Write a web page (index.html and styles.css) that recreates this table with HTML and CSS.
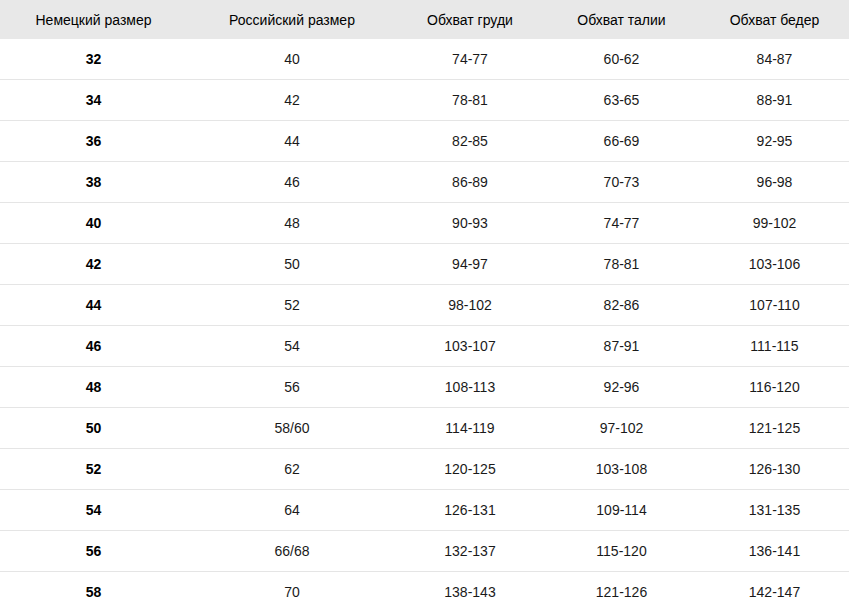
FILE: index.html
```html
<!DOCTYPE html>
<html lang="ru">
<head>
<meta charset="utf-8">
<link rel="stylesheet" href="styles.css">
</head>
<body>
<table class="size-table">
  <colgroup>
    <col class="c1"><col class="c2"><col class="c3"><col class="c4"><col class="c5">
  </colgroup>
  <thead>
    <tr><th>Немецкий размер</th><th>Российский размер</th><th>Обхват груди</th><th>Обхват талии</th><th>Обхват бедер</th></tr>
  </thead>
  <tbody>
    <tr><td class="de">32</td><td>40</td><td>74-77</td><td>60-62</td><td>84-87</td></tr>
    <tr><td class="de">34</td><td>42</td><td>78-81</td><td>63-65</td><td>88-91</td></tr>
    <tr><td class="de">36</td><td>44</td><td>82-85</td><td>66-69</td><td>92-95</td></tr>
    <tr><td class="de">38</td><td>46</td><td>86-89</td><td>70-73</td><td>96-98</td></tr>
    <tr><td class="de">40</td><td>48</td><td>90-93</td><td>74-77</td><td>99-102</td></tr>
    <tr><td class="de">42</td><td>50</td><td>94-97</td><td>78-81</td><td>103-106</td></tr>
    <tr><td class="de">44</td><td>52</td><td>98-102</td><td>82-86</td><td>107-110</td></tr>
    <tr><td class="de">46</td><td>54</td><td>103-107</td><td>87-91</td><td>111-115</td></tr>
    <tr><td class="de">48</td><td>56</td><td>108-113</td><td>92-96</td><td>116-120</td></tr>
    <tr><td class="de">50</td><td>58/60</td><td>114-119</td><td>97-102</td><td>121-125</td></tr>
    <tr><td class="de">52</td><td>62</td><td>120-125</td><td>103-108</td><td>126-130</td></tr>
    <tr><td class="de">54</td><td>64</td><td>126-131</td><td>109-114</td><td>131-135</td></tr>
    <tr><td class="de">56</td><td>66/68</td><td>132-137</td><td>115-120</td><td>136-141</td></tr>
    <tr><td class="de">58</td><td>70</td><td>138-143</td><td>121-126</td><td>142-147</td></tr>
  </tbody>
</table>
</body>
</html>
```
FILE: styles.css
```css
html, body {
  margin: 0;
  padding: 0;
  background: #fff;
}
body {
  font-family: "Liberation Sans", Arial, sans-serif;
  font-size: 14px;
  color: #222;
}
.size-table {
  width: 849px;
  border-collapse: collapse;
  table-layout: fixed;
}
.c1 { width: 187px; }
.c2 { width: 210px; }
.c3 { width: 146px; }
.c4 { width: 157px; }
.c5 { width: 149px; }
.size-table th {
  height: 39px;
  padding: 0;
  background: #e8e8e8;
  font-weight: normal;
  color: #000;
  text-align: center;
  vertical-align: middle;
}
.size-table td {
  height: 40px;
  padding: 0;
  text-align: center;
  vertical-align: middle;
  border-bottom: 1px solid #e5e5e5;
  color: #1a1a1a;
}
.size-table td.de {
  font-weight: bold;
  color: #000;
}
```
